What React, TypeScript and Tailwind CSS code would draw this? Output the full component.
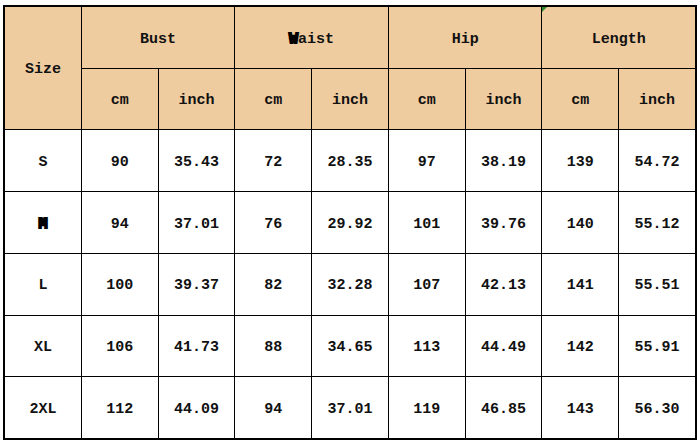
const groups = ["Bust", "Waist", "Hip", "Length"];

const rows = [
  ["S", "90", "35.43", "72", "28.35", "97", "38.19", "139", "54.72"],
  ["M", "94", "37.01", "76", "29.92", "101", "39.76", "140", "55.12"],
  ["L", "100", "39.37", "82", "32.28", "107", "42.13", "141", "55.51"],
  ["XL", "106", "41.73", "88", "34.65", "113", "44.49", "142", "55.91"],
  ["2XL", "112", "44.09", "94", "37.01", "119", "46.85", "143", "56.30"],
];

const head = "bg-[#efcc9f] flex items-center justify-center pt-[5px]";
const cell = "bg-white flex items-center justify-center pt-[5px]";

function Label({ text }: { text: string }) {
  // the original chart renders M / W as heavy blocky glyphs
  if (text.startsWith("M") || text.startsWith("W")) {
    return (
      <span>
        <span className="[-webkit-text-stroke:2px_black]">{text[0]}</span>
        {text.slice(1)}
      </span>
    );
  }
  return <span>{text}</span>;
}

export default function App() {
  return (
    <div className="w-[699px] h-[445px] bg-white pt-[5px] pl-[3px]">
      <div
        className="relative w-[694px] h-[435px] border-2 border-black bg-black grid grid-cols-9 grid-rows-7 gap-px font-bold text-[15px] text-[#111]"
        style={{ fontFamily: '"Liberation Mono", "DejaVu Sans Mono", monospace' }}
      >
        <div className={`${head} row-span-2`}>Size</div>
        {groups.map((g) => (
          <div key={g} className={`${head} col-span-2`}>
            <Label text={g} />
          </div>
        ))}
        {groups.map((g) => [
          <div key={g + "cm"} className={head}>cm</div>,
          <div key={g + "in"} className={head}>inch</div>,
        ])}
        {rows.map((r) =>
          r.map((v, i) => (
            <div key={r[0] + i} className={cell}>
              <Label text={v} />
            </div>
          ))
        )}
        <svg className="absolute left-[537px] top-0" width="5" height="5" viewBox="0 0 5 5">
          <polygon points="0,0 5,0 0,5" fill="#2e8b2e" />
        </svg>
      </div>
    </div>
  );
}
